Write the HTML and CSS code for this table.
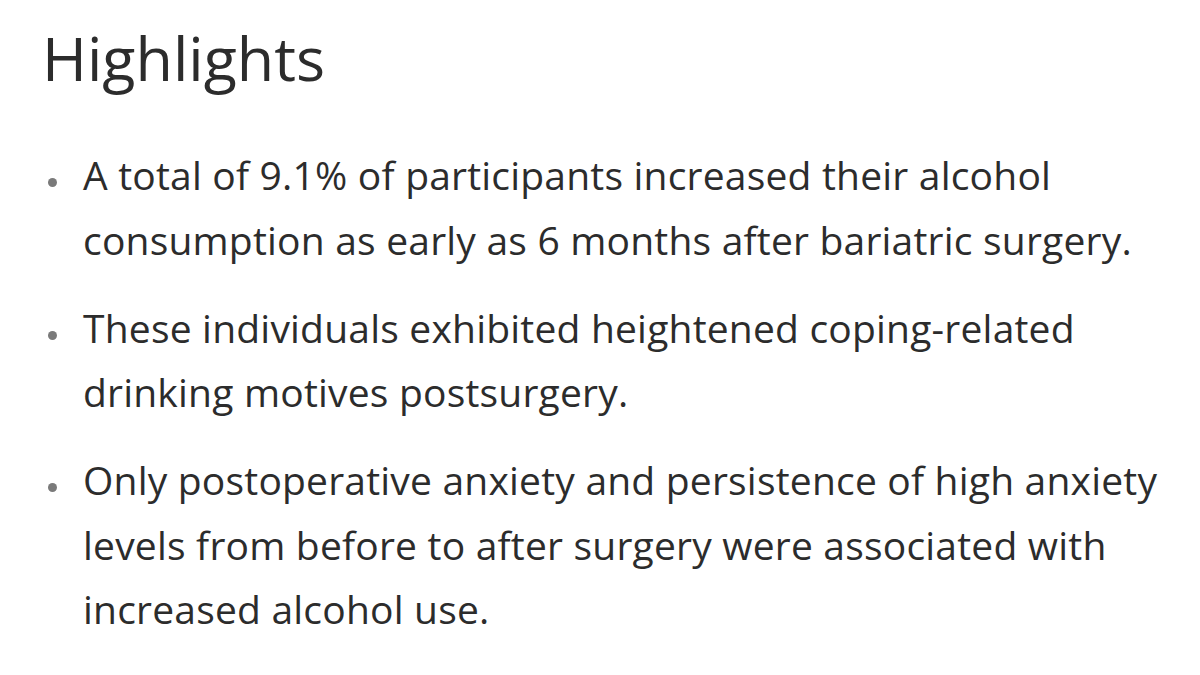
FILE: index.html
```html
<!DOCTYPE html>
<html lang="en">
<head>
<meta charset="utf-8">
<title>Highlights</title>
<link rel="stylesheet" href="styles.css">
</head>
<body>
<section class="highlights">
  <h1 class="highlights-title">Highlights</h1>
  <ul class="highlights-list">
    <li class="highlights-item">A total of 9.1% of participants increased their alcohol consumption as early as 6 months after bariatric surgery.</li>
    <li class="highlights-item">These individuals exhibited heightened coping-related drinking motives postsurgery.</li>
    <li class="highlights-item">Only postoperative anxiety and persistence of high anxiety levels from before to after surgery were associated with increased alcohol use.</li>
  </ul>
</section>
</body>
</html>
```

FILE: styles.css
```css
html, body {
  margin: 0;
  padding: 0;
  background: #ffffff;
}

body {
  font-family: "Open Sans", "Noto Sans", sans-serif;
  color: #2c2c2c;
}

.highlights {
  width: 1140px;
  padding: 22px 0 0 40px;
}

.highlights-title {
  margin: 0 0 0 2px;
  font-size: 61px;
  line-height: 72px;
  font-weight: 400;
  color: #2c2c2c;
}

.highlights-list {
  list-style: none;
  margin: 49px 0 0;
  padding: 0 0 0 43px;
}

.highlights-item {
  position: relative;
  font-size: 39px;
  line-height: 64.5px;
  letter-spacing: 0.2px;
}

.highlights-item + .highlights-item {
  margin-top: 23.5px;
}

.highlights-item::before {
  content: "";
  position: absolute;
  left: -35.5px;
  top: 35px;
  width: 9px;
  height: 9px;
  border-radius: 50%;
  background: #7a7a7a;
}
```
